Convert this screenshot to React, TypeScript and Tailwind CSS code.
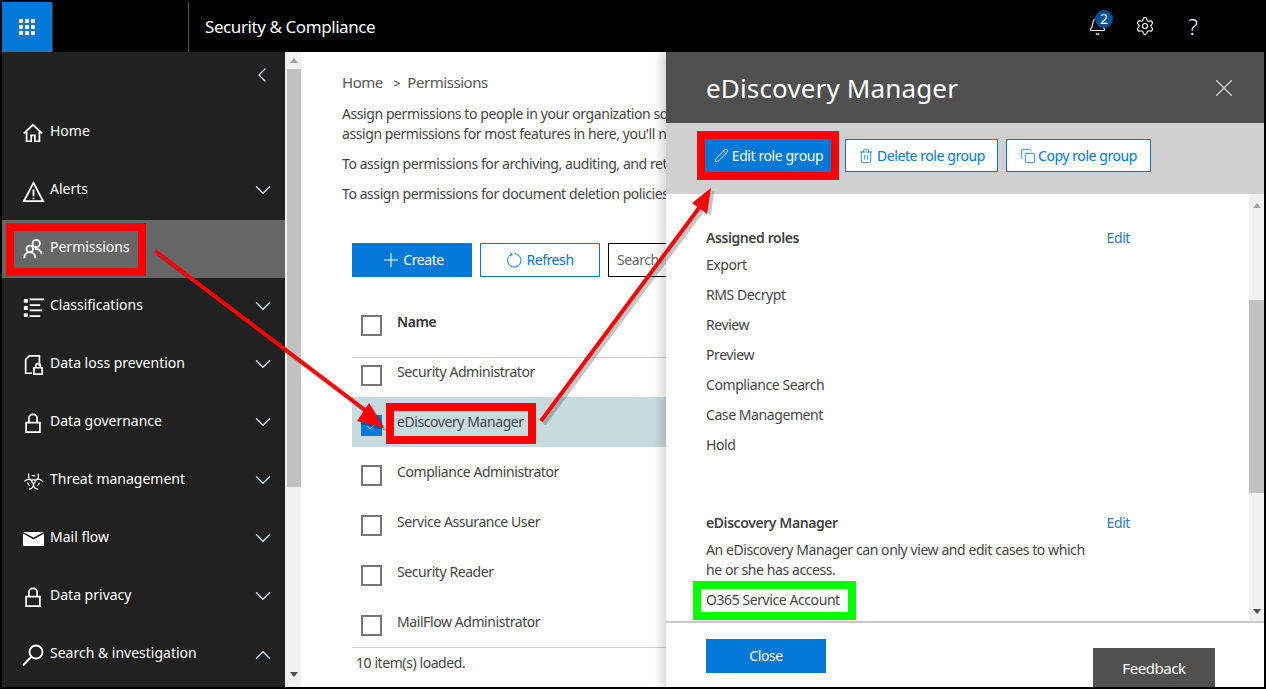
import React from "react";
import { Bell, Settings, Biohazard, ChevronLeft, ChevronDown, ChevronUp, X, Pencil, Trash2, Copy, Plus, Check } from "lucide-react";

const Sv = ({ children, w = 22, h = 22, vb = "0 0 24 24", sw = 1.9 }: any) => (
  <svg width={w} height={h} viewBox={vb} fill="none" stroke="currentColor" strokeWidth={sw} strokeLinejoin="miter">{children}</svg>
);

const HomeIcon = () => <Sv><path d="M2 12.5 12 3l10 9.5M5 10.5V21h5v-6.5h4V21h5V10.5" /></Sv>;
const AlertIcon = () => <Sv w={23} h={23}><path d="M12 3 2 22h20L12 3Z" /><path d="M12 10v7M12 18.5v1.5" /></Sv>;
const PeopleIcon = () => (
  <Sv>
    <circle cx="15.5" cy="6" r="4" />
    <circle cx="8.5" cy="12" r="3.6" />
    <path d="M2.5 22c0-4 2.5-6.5 6-6.5s6 2.5 6 6.5M14 12c3.5-.5 7 1.5 7.5 5.5" />
  </Sv>
);
const ListIcon = () => (
  <Sv w={23} h={23}><path d="M2 3h4v4H2zM2 10.500h4v4H2zM2 18h4v4H2z" fill="currentColor" stroke="none" /><path d="M8 3.500h15M8 9.500h11M8 15h13M8 21h11" strokeWidth="2" /></Sv>
);
const DocLockIcon = () => (
  <Sv><path d="M11 21H4V6l4-4h11v11" /><path d="M13 15h9v7h-9z" /><path d="M15 15v-2a2.500 2.500 0 0 1 5 0v2" /></Sv>
);
const LockIcon = () => <Sv><path d="M4.500 11.500h15V22h-15z" /><path d="M7.500 11.500V7a4.500 4.500 0 0 1 9 0v4.500" /></Sv>;
const MailIcon = () => (
  <svg width="21" height="14" viewBox="0 0 21 14"><path d="M0 0h21L10.500 5.500Z" fill="currentColor" /><path d="M0 1.500 10.500 7.500 21 1.500V14H0Z" fill="currentColor" /></svg>
);
const SearchIcon = () => <Sv w={24} h={24}><circle cx="15" cy="9" r="6.500" /><path d="M10 14 2 22.500" /></Sv>;

const items: [string, React.ReactNode, "down" | "up" | null][] = [
  ["Home", <HomeIcon />, null],
  ["Alerts", <AlertIcon />, "down"],
  ["Permissions", <PeopleIcon />, null],
  ["Classifications", <ListIcon />, "down"],
  ["Data loss prevention", <DocLockIcon />, "down"],
  ["Data governance", <LockIcon />, "down"],
  ["Threat management", <Biohazard size={21} strokeWidth={1.4} />, "down"],
  ["Mail flow", <MailIcon />, "down"],
  ["Data privacy", <LockIcon />, "down"],
  ["Search & investigation", <SearchIcon />, "up"],
];

const rows = ["Security Administrator", "eDiscovery Manager", "Compliance Administrator", "Service Assurance User", "Security Reader", "MailFlow Administrator"];
const roles = ["Export", "RMS Decrypt", "Review", "Preview", "Compliance Search", "Case Management", "Hold"];

const Box = ({ on = false }: { on?: boolean }) =>
  on ? (
    <span className="w-[21px] h-[21px] bg-[#0078d7] flex items-center justify-center shrink-0"><Check size={14} color="#fff" strokeWidth={1.3} /></span>
  ) : (
    <span className="w-[21px] h-[21px] border-2 border-[#767676] bg-white block shrink-0" />
  );

const ArrowUp = () => <span className="w-0 h-0 border-l-[4px] border-r-[4px] border-b-[5px] border-l-transparent border-r-transparent border-b-[#a3a3a3] block" />;
const ArrowDown = () => <span className="w-0 h-0 border-l-[4px] border-r-[4px] border-t-[5px] border-l-transparent border-r-transparent border-t-[#505050] block" />;

export default function App() {
  return (
    <div className="relative w-[1266px] h-[689px] bg-black p-[2px] overflow-hidden text-[14px] leading-[20px] tracking-[-0.42px]" style={{ fontFamily: '"Noto Sans", sans-serif' }}>
      <header className="h-[50px] flex text-white">
        <div className="w-[50px] bg-[#0078d7] flex items-center justify-center">
          <div className="grid grid-cols-3 gap-[2px]">
            {Array.from({ length: 9 }).map((_, i) => <span key={i} className="w-[4px] h-[4px] bg-white" />)}
          </div>
        </div>
        <div className="w-[1px] bg-[#333]" />
        <div className="w-[136px] border-r border-[#555]" />
        <div className="pl-[16px] text-[17px] flex items-center pb-[1px]">Security &amp; Compliance</div>
        <div className="ml-auto flex items-center pr-[66px] pb-[2px]">
          <div className="relative"><Bell size={19} strokeWidth={1.4} />
            <span className="absolute -top-[7px] left-[7px] w-[18px] h-[18px] rounded-full bg-[#004f8f] text-[14px] leading-[18px] text-center tracking-normal">2</span>
          </div>
          <span className="ml-[28px]"><Settings size={20} strokeWidth={1.4} /></span>
          <span className="ml-[33px] text-[22px] w-[10px] text-center font-light">?</span>
        </div>
      </header>
      <div className="h-[635px] flex">
        <aside className="w-[283px] bg-[#212121] text-white shrink-0 tracking-normal">
          <div className="h-[52px] flex justify-end items-start pt-[11px] pr-[11px]"><ChevronLeft size={24} strokeWidth={1.2} color="#dbeafe" /></div>
          {items.map(([label, icon, ch]) => (
            <div key={label} className={`h-[58px] flex items-center pl-[19px] pr-[9px] ${label === "Permissions" ? "bg-[#666666]" : ""}`}>
              <span className="w-[24px] flex justify-center shrink-0">{icon}</span>
              <span className="ml-[5px] -mt-[5px]">{label}</span>
              {ch === "down" && <ChevronDown className="ml-auto -mt-[3px]" size={26} strokeWidth={1.2} color="#dbeafe" />}
              {ch === "up" && <ChevronUp className="ml-auto -mt-[1px]" size={26} strokeWidth={1.2} color="#dbeafe" />}
            </div>
          ))}
        </aside>
        <div className="w-[16px] bg-[#f1f1f1] pl-[2px] flex flex-col shrink-0">
          <div className="h-[17px] flex items-center justify-center"><ArrowUp /></div>
          <div className="h-[418px] bg-[#c1c1c1]" />
          <div className="flex-1" />
          <div className="h-[17px] flex items-center justify-center mb-[4px]"><ArrowDown /></div>
        </div>
        <main className="w-[365px] bg-white shrink-0 overflow-hidden whitespace-nowrap text-[#444]">
          <div className="pl-[41px] pt-[20px] h-[191px]">
            <div className="text-[15px] leading-[20px] text-[#555] tracking-[-0.45px]">Home <span className="text-[#333] mx-[7px] text-[13px]">&gt;</span>Permissions</div>
            <p className="mt-[11px]">Assign permissions to people in your organization so they</p>
            <p>assign permissions for most features in here, you'll need</p>
            <p className="mt-[10px]">To assign permissions for archiving, auditing, and retention</p>
            <p className="mt-[10px]">To assign permissions for document deletion policies</p>
          </div>
          <div className="flex pl-[51px] gap-[8px] h-[34px]">
            <div className="w-[120px] shrink-0 bg-[#0078d7] text-white flex items-center justify-center"><Plus size={22} strokeWidth={1.2} /><span className="ml-[1px]">Create</span></div>
            <div className="w-[120px] shrink-0 bg-white border border-[#0078d7] text-[#0078d7] flex items-center justify-center gap-[4px]">
              <Sv w={16} h={16} sw={1.5}><path d="M8 3.5a10 10 0 1 0 5 -1M7 1l2 3-3 2" /></Sv>Refresh
            </div>
            <div className="w-[200px] shrink-0 bg-white border border-black text-[#666] flex items-center pl-[8px]">Search</div>
          </div>
          <div className="h-[81px] pl-[9px] border-b border-[#ccc] ml-[51px] pt-[38px] flex items-start">
            <Box /><span className="ml-[15px] -mt-[3px] font-semibold text-[#333]">Name</span>
          </div>
          <div className="ml-[51px] border-b border-[#ccc] h-[290px] overflow-hidden">
            <div className="-mt-[11px]">
              {rows.map((r) => (
                <div key={r} className={`h-[50px] flex pl-[9px] ${r === "eDiscovery Manager" ? "bg-[#c7dbdf]" : ""}`}>
                  <div className="pt-[18px]"><Box on={r === "eDiscovery Manager"} /></div>
                  <span className="ml-[15px] pt-[15px]">{r}</span>
                </div>
              ))}
            </div>
          </div>
          <div className="pl-[55px] pt-[5px] text-[#444]">10 item(s) loaded.</div>
        </main>
        <section className="flex-1 flex flex-col bg-white shadow-[-6px_0_8px_rgba(0,0,0,0.14)] relative">
          <div className="h-[71px] bg-[#505050] text-white flex items-center pl-[40px] pr-[25px]">
            <h1 className="text-[26px] leading-[34px] tracking-[0.15px]">eDiscovery Manager</h1>
            <X className="ml-auto" size={30} strokeWidth={0.9} color="#ddd" />
          </div>
          <div className="h-[71px] bg-[#d0d0d0] flex items-start pt-[16px] pl-[39px] text-[#0078d7]">
            <div className="w-[127px] h-[33px] bg-[#0078d7] text-white flex items-center justify-center gap-[3px]"><Pencil size={15} strokeWidth={1.2} />Edit role group</div>
            <div className="ml-[13px] w-[153px] h-[33px] bg-white border border-[#0078d7] flex items-center justify-center gap-[3px]"><Trash2 size={16} strokeWidth={1.2} />Delete role group</div>
            <div className="ml-[8px] w-[145px] h-[33px] bg-white border border-[#0078d7] flex items-center justify-center gap-[2px]"><Copy size={16} strokeWidth={1.2} />Copy role group</div>
          </div>
          <div className="flex h-[429px] border-b-[2px] border-[#c8c8c8] overflow-hidden">
            <div className="flex-1 pl-[40px] pt-[34px] text-[#444]">
              <div className="flex w-[424px] justify-between"><b className="font-semibold">Assigned roles</b><span className="text-[#2b78bd]">Edit</span></div>
              <div className="mt-[7px]">{roles.map((r) => <div key={r} className="h-[30px]">{r}</div>)}</div>
              <div className="flex w-[424px] justify-between mt-[48px]"><b className="font-semibold">eDiscovery Manager</b><span className="text-[#2b78bd]">Edit</span></div>
              <p className="mt-[7px] w-[385px]">An eDiscovery Manager can only view and edit cases to which he or she has access.</p>
              <p className="mt-[10px]">O365 Service Account</p>
            </div>
            <div className="w-[15px] bg-[#f1f1f1] flex flex-col">
              <div className="h-[20px] flex items-center justify-center pt-[2px]"><ArrowUp /></div>
              <div className="h-[86px]" />
              <div className="h-[193px] bg-[#c1c1c1]" />
              <div className="flex-1" />
              <div className="h-[16px] flex items-center justify-center mb-[2px]"><ArrowDown /></div>
            </div>
          </div>
          <div className="flex-1 flex pl-[40px] pr-[49px] justify-between">
            <div className="mt-[16px] w-[120px] h-[34px] bg-[#0078d7] text-white flex items-center justify-center">Close</div>
            <div className="mt-[25px] w-[122px] h-[39px] bg-[#505050] text-white flex items-center justify-center text-[15px]">Feedback</div>
          </div>
        </section>
      </div>

      {/* annotation boxes drawn over the screenshot */}
      <div className="absolute left-[6px] top-[223px] w-[140px] h-[53px] border-[8px] border-[#ff0000]" />
      <div className="absolute left-[386px] top-[403px] w-[150px] h-[41px] border-[8px] border-[#ff0000]" />
      <div className="absolute left-[697px] top-[131px] w-[142px] h-[49px] border-[8px] border-[#ff0000]" />
      <div className="absolute left-[693px] top-[581px] w-[163px] h-[39px] border-[8px] border-[#00ff00]" />
      <svg className="absolute left-0 top-0 pointer-events-none" width="1266" height="689" viewBox="0 0 1266 689">
        <g fill="#000" opacity="0.22" transform="translate(3 3)">
          <path d="M155 251 365 410M541 421 699 208" stroke="#000" strokeWidth="4" />
          <path d="M384 428 357 421 369 403ZM711 188 693 202 708 212Z" />
        </g>
        <path d="M155 251 365 410M541 421 699 208" stroke="#ff0000" strokeWidth="4" fill="none" />
        <path d="M384 428 357 421 369 403ZM711 188 692 203 707 214Z" fill="#ff0000" />
      </svg>
    </div>
  );
}
